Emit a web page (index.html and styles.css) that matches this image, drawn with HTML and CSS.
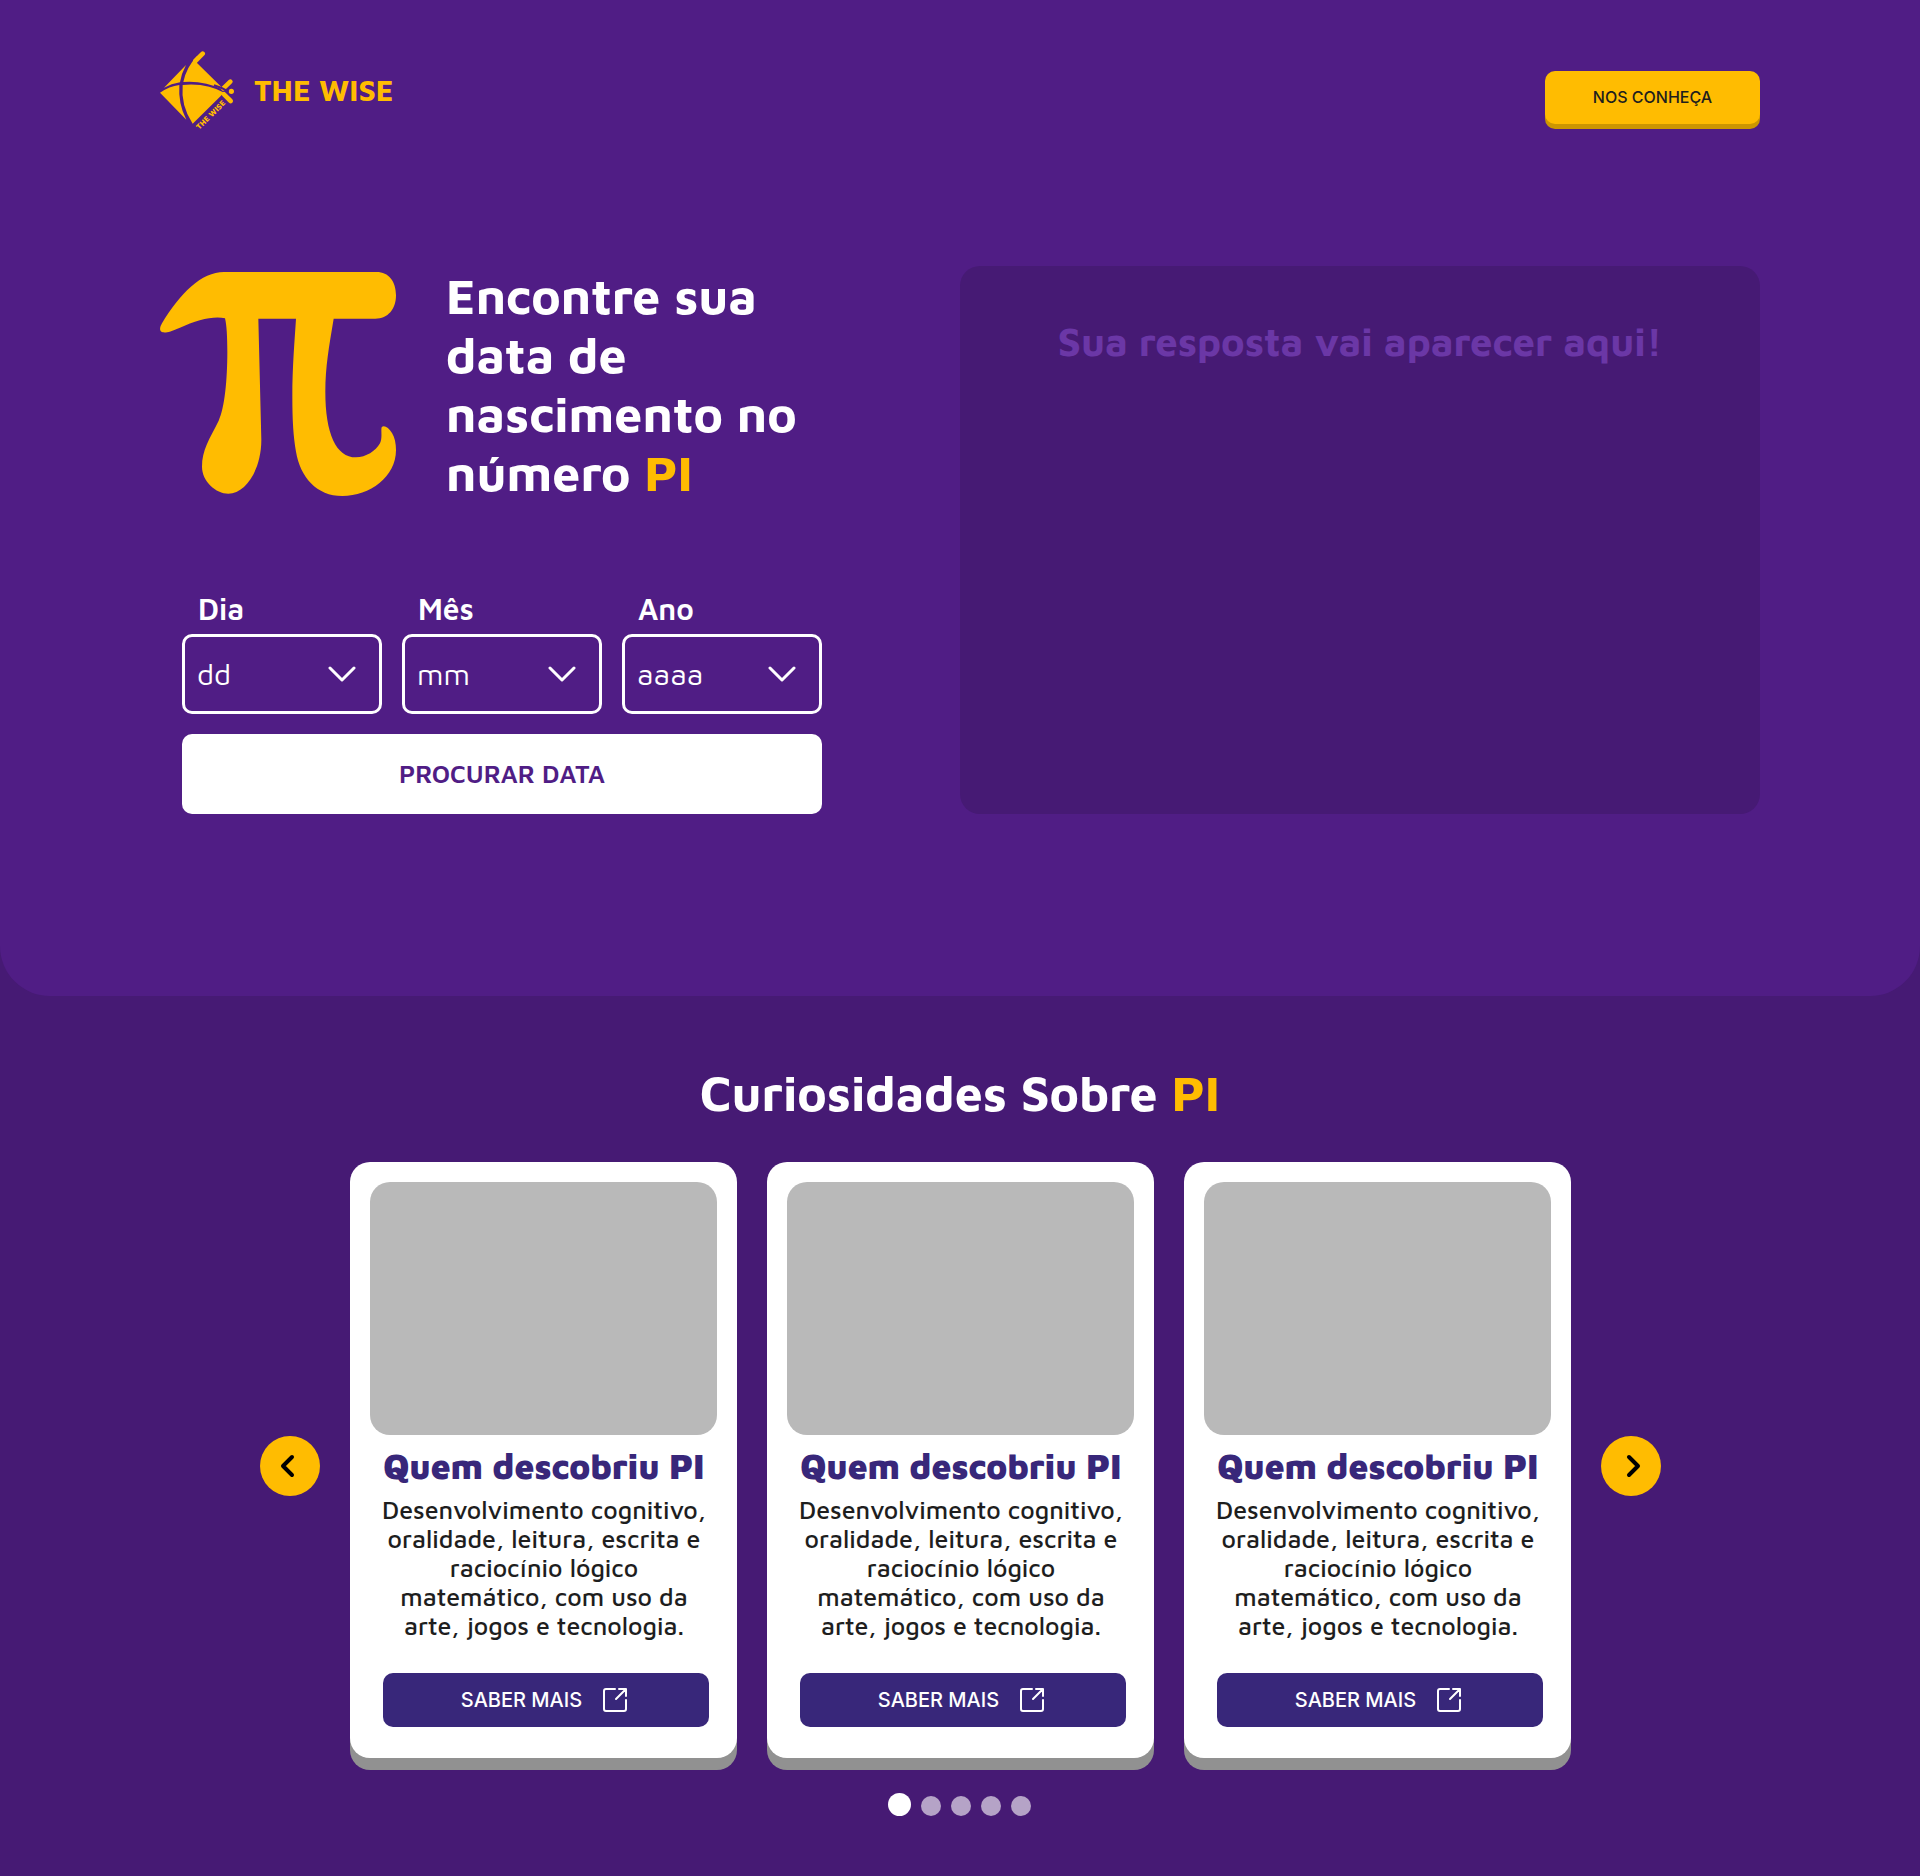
FILE: index.html
```html
<!DOCTYPE html>
<html lang="pt-BR">
<head>
<meta charset="utf-8">
<meta name="viewport" content="width=device-width, initial-scale=1">
<title>The Wise - Encontre sua data no PI</title>
<link rel="stylesheet" href="styles.css">
</head>
<body>
<div class="hero">
  <header class="header">
    <a class="brand" href="#">
      <svg class="brand-logo" viewBox="60 62 225 243" aria-hidden="true">
        <g fill="#ffbc01">
          <path d="M72 172 L138 104 Q124 130 120 156 Q94 160 72 172Z"/>
          <path d="M60 187 Q88 168 118 164 Q114 220 139 268Z"/>
          <path d="M130 155 Q138 112 172 76 L171 98 L242 168 L250 178 Q190 150 130 155Z"/>
          <path d="M128 164 Q200 157 256 189 L246 193 L158 280 Q122 226 128 164Z"/>
          <circle cx="274" cy="183" r="8"/>
        </g>
        <g fill="none" stroke="#ffbc01" stroke-linecap="round">
          <path stroke-width="14" d="M188 70 L166 92"/>
          <path stroke-width="14" d="M271 154 L250 174 M272 212 L252 192"/>
        </g>
        <path fill="none" stroke="#501d85" stroke-width="6" d="M222 165 Q246 172 266 184"/>
        <text class="brand-logo-text" transform="translate(178 299) rotate(-45)">THE WISE</text>
      </svg>
      <span class="brand-name">THE WISE</span>
    </a>
    <button class="about-button" type="button">NOS CONHEÇA</button>
  </header>

  <main class="search">
    <div class="search-main">
      <div class="intro">
        <svg class="pi" viewBox="30 66 708 672" role="img" aria-label="Pi">
          <path fill="#ffbc01" d="M222 66 H680 C716 66 738 94 738 136 C738 178 714 206 676 206 H551 C537 290 526 350 526 425 C526 550 558 622 618 622 C648 622 677 603 690 580 C698 563 692 540 695 532 C701 524 716 532 726 549 C734 562 738 580 738 600 C738 680 660 738 577 738 C500 738 450 680 438 605 C430 560 427 510 427 440 C427 350 434 270 438 206 H325 L334 570 C334 660 286 731 235 731 C198 731 156 694 156 650 C156 600 178 568 206 512 C224 474 232 390 232 306 C232 260 230 225 225 205 C190 197 142 210 88 234 C62 245 49 249 38 247 C26 244 30 230 36 220 C90 130 154 66 222 66Z"/>
        </svg>
        <h1 class="title">Encontre sua data de nascimento no número <span class="accent">PI</span></h1>
      </div>

      <form class="date-form">
        <div class="fields">
          <div class="field">
            <label class="field-label" for="dia">Dia</label>
            <div class="select-box">
              <select class="select" id="dia"><option>dd</option></select>
              <svg class="chevron" viewBox="0 0 28 16" aria-hidden="true"><path d="M2 2 L14 14 L26 2"/></svg>
            </div>
          </div>
          <div class="field">
            <label class="field-label" for="mes">Mês</label>
            <div class="select-box">
              <select class="select" id="mes"><option>mm</option></select>
              <svg class="chevron" viewBox="0 0 28 16" aria-hidden="true"><path d="M2 2 L14 14 L26 2"/></svg>
            </div>
          </div>
          <div class="field">
            <label class="field-label" for="ano">Ano</label>
            <div class="select-box">
              <select class="select" id="ano"><option>aaaa</option></select>
              <svg class="chevron" viewBox="0 0 28 16" aria-hidden="true"><path d="M2 2 L14 14 L26 2"/></svg>
            </div>
          </div>
        </div>
        <button class="submit" type="button">PROCURAR DATA</button>
      </form>
    </div>
    <section class="answer"><p class="answer-text">Sua resposta vai aparecer aqui!</p></section>
  </main>
</div>

<section class="facts">
  <h2 class="title">Curiosidades Sobre <span class="accent">PI</span></h2>
  <div class="carousel">
    <button class="arrow" type="button" aria-label="Anterior">
      <svg viewBox="0 0 60 60" aria-hidden="true"><path d="M32 21 L23 30 L32 39"/></svg>
    </button>
    <div class="cards">
      <article class="card">
        <div class="card-image"></div>
        <div class="card-text">
          <h3 class="card-title">Quem descobriu PI</h3>
          <p class="card-body">Desenvolvimento cognitivo, oralidade, leitura, escrita e raciocínio lógico matemático, com uso da arte, jogos e tecnologia.</p>
        </div>
        <a class="card-link" href="#">SABER MAIS
          <svg class="link-icon" viewBox="0 0 26 26" aria-hidden="true"><path d="M13 2 H4 Q2 2 2 4 V22 Q2 24 4 24 H22 Q24 24 24 22 V13 M17 2 H24 V9 M24 2 L14 12"/></svg>
        </a>
      </article>
      <article class="card">
        <div class="card-image"></div>
        <div class="card-text">
          <h3 class="card-title">Quem descobriu PI</h3>
          <p class="card-body">Desenvolvimento cognitivo, oralidade, leitura, escrita e raciocínio lógico matemático, com uso da arte, jogos e tecnologia.</p>
        </div>
        <a class="card-link" href="#">SABER MAIS
          <svg class="link-icon" viewBox="0 0 26 26" aria-hidden="true"><path d="M13 2 H4 Q2 2 2 4 V22 Q2 24 4 24 H22 Q24 24 24 22 V13 M17 2 H24 V9 M24 2 L14 12"/></svg>
        </a>
      </article>
      <article class="card">
        <div class="card-image"></div>
        <div class="card-text">
          <h3 class="card-title">Quem descobriu PI</h3>
          <p class="card-body">Desenvolvimento cognitivo, oralidade, leitura, escrita e raciocínio lógico matemático, com uso da arte, jogos e tecnologia.</p>
        </div>
        <a class="card-link" href="#">SABER MAIS
          <svg class="link-icon" viewBox="0 0 26 26" aria-hidden="true"><path d="M13 2 H4 Q2 2 2 4 V22 Q2 24 4 24 H22 Q24 24 24 22 V13 M17 2 H24 V9 M24 2 L14 12"/></svg>
        </a>
      </article>
    </div>
    <button class="arrow" type="button" aria-label="Próximo">
      <svg viewBox="0 0 60 60" aria-hidden="true"><path d="M28 21 L37 30 L28 39"/></svg>
    </button>
  </div>
  <div class="dots">
    <button class="dot dot-active" type="button" aria-label="Página 1"></button>
    <button class="dot" type="button" aria-label="Página 2"></button>
    <button class="dot" type="button" aria-label="Página 3"></button>
    <button class="dot" type="button" aria-label="Página 4"></button>
    <button class="dot" type="button" aria-label="Página 5"></button>
  </div>
</section>
</body>
</html>
```
FILE: styles.css
```css
* {
  box-sizing: border-box;
  margin: 0;
  padding: 0;
}

body {
  background: #461a74;
  color: #fff;
  font-family: "Maven Pro", Lato, sans-serif;
}

button {
  border: 0;
  font-family: inherit;
  cursor: pointer;
}

a {
  text-decoration: none;
}

.accent {
  color: #ffbc01;
}

.title {
  font-size: 50px;
  font-weight: 700;
  line-height: 59px;
}

/* Hero */
.hero {
  padding: 50px 160px 182px;
  background: #501d85;
  border-radius: 0 0 50px 50px;
}

.header {
  display: flex;
  justify-content: space-between;
  align-items: center;
  height: 82px;
  margin-bottom: 134px;
}

.brand {
  display: flex;
  align-items: center;
  gap: 19px;
  color: #ffbc01;
}

.brand-logo {
  width: 75px;
  height: 81px;
}

.brand-logo-text {
  fill: #ffbc01;
  font-size: 24px;
  font-weight: 800;
}

.brand-name {
  padding-bottom: 2px;
  font-size: 30px;
  font-weight: 700;
  line-height: 36px;
}

.about-button {
  width: 215px;
  height: 53px;
  margin-top: 12px;
  border-radius: 10px;
  background: #ffbc01;
  box-shadow: 0 5px 0 #cc9601;
  color: #1e1e1e;
  font-family: Inter, sans-serif;
  font-size: 16px;
  font-weight: 500;
}

.search {
  display: grid;
  grid-template-columns: 1fr 1fr;
}

.search-main {
  display: flex;
  flex-direction: column;
  justify-content: space-between;
  min-height: 548px;
}

.intro {
  display: flex;
  gap: 50px;
}

.pi {
  flex: none;
  width: 236px;
  height: 224px;
  margin-top: 6px;
}

.intro .title {
  max-width: 380px;
}

.date-form {
  display: flex;
  flex-direction: column;
  gap: 20px;
  width: 640px;
  margin-left: 22px;
}

.fields {
  display: grid;
  grid-template-columns: repeat(3, 1fr);
  gap: 20px;
}

.field {
  display: flex;
  flex-direction: column;
  gap: 7px;
}

.field-label {
  padding-left: 16px;
  font-size: 30px;
  font-weight: 600;
  line-height: 36px;
}

.select-box {
  position: relative;
}

.select {
  width: 100%;
  height: 80px;
  padding: 0 12px 2px;
  border: 3px solid #fff;
  border-radius: 10px;
  background: transparent;
  color: #fff;
  appearance: none;
  font-family: inherit;
  font-size: 30px;
  font-weight: 300;
}

.chevron {
  position: absolute;
  top: 32px;
  right: 26px;
  width: 28px;
  height: 16px;
  fill: none;
  stroke: #fff;
  stroke-width: 3;
  stroke-linecap: round;
  stroke-linejoin: round;
  pointer-events: none;
}

.submit {
  height: 80px;
  padding-bottom: 2px;
  border-radius: 10px;
  background: #fff;
  color: #501d85;
  font-size: 25px;
  font-weight: 600;
}

.answer {
  padding: 51px 40px;
  border-radius: 20px;
  background: #461a74;
}

.answer-text {
  color: #6b37a6;
  font-size: 40px;
  font-weight: 700;
  line-height: 48px;
  text-align: center;
}

/* Facts */
.facts {
  display: flex;
  flex-direction: column;
  align-items: center;
  padding: 67px 40px 60px;
}

.carousel {
  display: flex;
  align-items: center;
  gap: 30px;
  margin-top: 40px;
}

.arrow {
  flex: none;
  width: 60px;
  height: 60px;
  margin-top: 12px;
  border-radius: 50%;
  background: #ffbc01;
}

.arrow svg {
  display: block;
  fill: none;
  stroke: #000;
  stroke-width: 4;
  stroke-linecap: round;
  stroke-linejoin: round;
}

.cards {
  display: flex;
  gap: 30px;
}

.card {
  display: flex;
  flex-direction: column;
  width: 387px;
  padding: 20px 20px 31px;
  border-radius: 20px;
  background: #fff;
  box-shadow: 0 12px 0 #919191;
}

.card-image {
  height: 253px;
  border-radius: 20px;
  background: #b9b9b9;
}

.card-text {
  padding: 11px 10px 0 12px;
  text-align: center;
}

.card-title {
  color: #38277a;
  font-size: 35px;
  font-weight: 900;
  line-height: 40px;
}

.card-body {
  margin-top: 9px;
  color: #1e1e1e;
  font-size: 25px;
  font-weight: 500;
  line-height: 29px;
}

.card-link {
  display: flex;
  align-items: center;
  justify-content: center;
  gap: 20px;
  height: 54px;
  margin: 33px 8px 0 13px;
  padding-right: 2px;
  border-radius: 10px;
  background: #38277a;
  color: #fff;
  font-family: Inter, sans-serif;
  font-size: 20px;
  font-weight: 500;
}

.link-icon {
  width: 26px;
  height: 26px;
  fill: none;
  stroke: #fff;
  stroke-width: 2;
  stroke-linecap: round;
  stroke-linejoin: round;
}

.dots {
  display: flex;
  align-items: flex-end;
  gap: 10px;
  margin-top: 35px;
  padding-right: 2px;
}

.dot {
  width: 20px;
  height: 20px;
  border-radius: 50%;
  background: #b5a3c7;
}

.dot-active {
  width: 23px;
  height: 23px;
  background: #fff;
}
```
